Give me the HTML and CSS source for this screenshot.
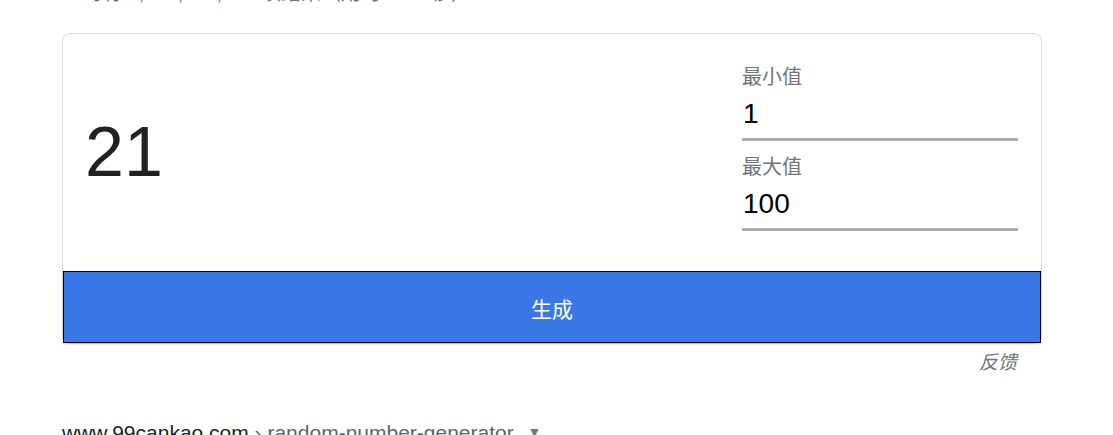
FILE: index.html
```html
<!DOCTYPE html>
<html lang="zh-CN">
<head>
  <meta charset="UTF-8">
  <meta name="viewport" content="width=device-width, initial-scale=1.0">
  <title>随机数生成器</title>
  <link rel="stylesheet" href="styles.css">
</head>
<body>
  <div class="page">
    <div class="stats">约有 2,670,000,000 项结果（用时 0.45 秒）</div>

    <div class="card">
      <div class="card-body">
        <div class="result" id="result">21</div>
        <div class="fields">
          <label class="field">
            <span class="field-label">最小值</span>
            <input id="min" type="text" value="1" />
          </label>
          <label class="field">
            <span class="field-label">最大值</span>
            <input id="max" type="text" value="100" />
          </label>
        </div>
      </div>
      <button class="generate" id="generate">生成</button>
    </div>
    <div class="feedback">反馈</div>

    <div class="cite">
      <span class="site">www.99cankao.com</span>
      <span class="path">› random-number-generator</span>
      <span class="caret">▼</span>
    </div>
  </div>

  <script>
    const minInput = document.getElementById('min');
    const maxInput = document.getElementById('max');
    const resultBox = document.getElementById('result');

    document.getElementById('generate').addEventListener('click', () => {
      const lo = parseInt(minInput.value, 10) || 0;
      const hi = parseInt(maxInput.value, 10) || 0;
      const a = Math.min(lo, hi);
      const b = Math.max(lo, hi);
      resultBox.textContent = Math.floor(Math.random() * (b - a + 1)) + a;
    });
  </script>
</body>
</html>
```

FILE: styles.css
```css
* { box-sizing: border-box; }
body {
  margin: 0;
  font-family: "Liberation Sans", "Noto Sans CJK SC", sans-serif;
  background: #fff;
  color: #202124;
  overflow: hidden;
}
.page {
  padding-left: 62px;
  width: 1042px;
}
.stats {
  font-size: 20px;
  line-height: 24px;
  color: #70757a;
  margin-top: -19px;
  padding-left: 20px;
  height: 24px;
}
.card {
  margin-top: 28px;
  border: 1px solid #dadce0;
  border-radius: 8px;
  width: 980px;
}
.card-body {
  display: flex;
  align-items: center;
  justify-content: space-between;
  padding: 31px 23px 40px 22px;
}
.result {
  font-size: 70px;
  color: #202124;
  margin-top: 8px;
}
.fields {
  width: 276px;
  display: flex;
  flex-direction: column;
  gap: 14px;
}
.field {
  display: flex;
  flex-direction: column;
}
.field-label {
  font-size: 20px;
  line-height: 24px;
  color: #70757a;
}
.field input {
  height: 52px;
  border: none;
  border-bottom: 3px solid #aaa;
  padding: 0 1px;
  font-family: "Liberation Sans", sans-serif;
  font-size: 28px;
  color: #000;
  outline: none;
  background: transparent;
}
.generate {
  display: block;
  width: 100%;
  height: 72px;
  margin: 0;
  background: #3b78e7;
  border: 1px solid #000;
  color: #fff;
  font-family: "Liberation Sans", "Noto Sans CJK SC", sans-serif;
  font-size: 21px;
  padding-top: 3px;
  box-shadow: 0 1px 2px rgba(0, 0, 0, 0.2);
  cursor: pointer;
}
.feedback {
  width: 980px;
  text-align: right;
  padding-right: 25px;
  margin-top: 3px;
  font-size: 19px;
  font-style: italic;
  color: #70757a;
}
.cite {
  margin-top: 47px;
  font-size: 21px;
  white-space: nowrap;
}
.site { color: #202124; }
.path { color: #5f6368; }
.caret {
  font-size: 14px;
  color: #70757a;
  margin-left: 8px;
  position: relative;
  top: -3px;
}
```
